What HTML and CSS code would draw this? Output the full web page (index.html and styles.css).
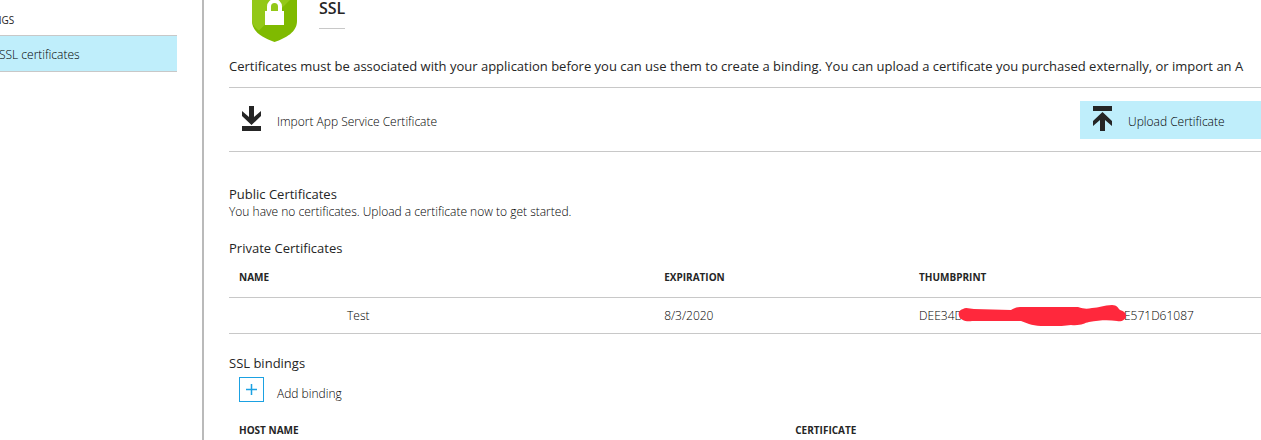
FILE: index.html
```
<!DOCTYPE html>
<html lang="en">
<head>
    <meta charset="UTF-8">
    <meta name="viewport" content="width=device-width, initial-scale=1.0">
    <title>SSL certificates</title>
    <link rel="stylesheet" href="styles.css">
</head>
<body>
    <nav class="sidebar">
        <h2 class="menu-title">NGS</h2>
        <a class="menu-item" href="#">SSL certificates</a>
    </nav>

    <main class="content">
        <header class="page-header">
            <svg class="shield" viewBox="0 0 46 42" aria-hidden="true">
                <path fill="#7fba00" d="M0 0h45v21c0 11-11 17-22.500 21C11 38 0 32 0 21z"/>
                <path fill="#93c818" d="M0 0h38L7 30.500C3 28 0 24 0 20z"/>
                <path fill="none" stroke="#fff" stroke-width="4" d="M17 12V6.500a5.500 5.500 0 0 1 11 0V12"/>
                <rect fill="#fff" x="13" y="11" width="19" height="14"/>
            </svg>
            <h1>SSL</h1>
        </header>

        <p class="intro">Certificates must be associated with your application before you can use them to create a binding. You can upload a certificate you purchased externally, or import an A</p>

        <div class="toolbar">
            <button class="tool" type="button">
                <svg class="tool-icon" viewBox="0 0 19 25" aria-hidden="true">
                    <path d="M7 0h5v11l7-6v5L9.500 19 0 10V5l7 6zM0 20h19v5H0z"/>
                </svg>
                Import App Service Certificate
            </button>
            <button class="tool upload" type="button">
                <svg class="tool-icon" viewBox="0 0 19 25" aria-hidden="true">
                    <path d="M0 0h19v5H0zM9.500 6L19 15v5l-7-6v11H7V14l-7 6v-5z"/>
                </svg>
                Upload Certificate
            </button>
        </div>

        <section class="public">
            <h2>Public Certificates</h2>
            <p>You have no certificates. Upload a certificate now to get started.</p>
        </section>

        <section class="private">
            <h2>Private Certificates</h2>
            <table class="certs">
                <thead>
                    <tr>
                        <th class="col-name">NAME</th>
                        <th class="col-date">EXPIRATION</th>
                        <th>THUMBPRINT</th>
                    </tr>
                </thead>
                <tbody>
                    <tr>
                        <td class="cert-name">Test</td>
                        <td>8/3/2020</td>
                        <td>
                            <div class="thumbprint">
                                <span>DEE34D</span>
                                <svg class="redacted" viewBox="0 0 168 21" aria-hidden="true">
                                    <path fill="#ff283c" d="M5 4c3-2 7 0 11 0l37 1c3-2 6-3 9-3h58c6 2 9 2 14 1 7 0 12-3 20-3 5 0 6 3 8 5 4 1 6 3 6 6 0 4-5 6-9 5-8-1-17-1-28 1-5 1-8 4-18 3-14 2-32 2-42-1l-8-3H14c-6 1-12-1-13-5C0 8 1 5 5 4z"/>
                                </svg>
                                <span>E571D61087</span>
                            </div>
                        </td>
                    </tr>
                </tbody>
            </table>
        </section>

        <section class="bindings">
            <h2>SSL bindings</h2>
            <button class="add" type="button">
                <svg class="add-icon" viewBox="0 0 25 25" aria-hidden="true">
                    <rect x=".5" y=".5" width="24" height="24"/>
                    <path stroke-width="1.500" d="M12.500 7v11M7 12.500h11"/>
                </svg>
                <span>Add binding</span>
            </button>
            <table class="certs">
                <thead>
                    <tr>
                        <th class="col-host">HOST NAME</th>
                        <th>CERTIFICATE</th>
                    </tr>
                </thead>
            </table>
        </section>
    </main>
</body>
</html>
```
FILE: styles.css
```
* {
    box-sizing: border-box;
}
body {
    margin: 0;
    display: flex;
    min-height: 100vh;
    overflow: hidden;
    background-color: #fff;
    color: #000;
    font-family: "Open Sans", "Noto Sans", sans-serif;
    font-size: 12px;
    font-weight: 300;
    line-height: 16px;
}
h1, h2, p {
    margin: 0;
}
h1, h2, th, .intro {
    color: #252525;
}
button {
    border: none;
    padding: 0;
    background: none;
    color: inherit;
    font: inherit;
    text-align: left;
    cursor: pointer;
}
.sidebar {
    flex: 0 0 202px;
    padding: 12px 25px 0 0;
    overflow: hidden;
}
.menu-title {
    margin: 0 0 7px -6px;
    font-size: 10px;
    font-weight: 400;
}
.menu-item {
    display: block;
    padding: 11px 0 8px;
    border-top: 1px solid #c8c8c8;
    border-bottom: 1px solid #c8c8c8;
    background-color: #bfeefb;
    color: inherit;
    text-decoration: none;
    text-indent: -1px;
}
.content {
    flex: 1;
    min-width: 0;
    padding-left: 25px;
    border-left: 2px solid #bababa;
}
.page-header {
    display: flex;
    align-items: flex-start;
    gap: 21px;
    padding-left: 23px;
}
.shield {
    width: 46px;
    height: 42px;
}
h1 {
    padding-bottom: 8px;
    border-bottom: 1px solid #c8c8c8;
    font-size: 16px;
    font-weight: 600;
    line-height: 20px;
    margin-top: -2px;
    padding-bottom: 10px;
}
.intro {
    padding: 14px 0 11px;
    overflow: hidden;
    font-size: 13px;
    font-weight: 400;
    line-height: 20px;
    white-space: nowrap;
}
.toolbar {
    display: flex;
    justify-content: space-between;
    padding: 13px 0 12px;
    border-top: 1px solid #c8c8c8;
    border-bottom: 1px solid #c8c8c8;
}
.tool {
    display: flex;
    align-items: flex-end;
    gap: 16px;
    height: 38px;
    padding: 0 13px 9px;
}
.upload {
    width: 181px;
    background-color: #bfeefb;
}
.tool-icon {
    align-self: center;
    width: 19px;
    height: 25px;
    margin-bottom: -5px;
    fill: #252525;
}
section h2 {
    font-size: 13px;
    font-weight: 400;
    line-height: 18px;
}
.public {
    padding-top: 33px;
}
.public p {
    padding-top: 1px;
}
.private {
    padding-top: 19px;
}
.bindings {
    padding-top: 20px;
}
.certs {
    width: 100%;
    table-layout: fixed;
    border-collapse: collapse;
}
.certs th {
    padding: 12px 10px;
    font-size: 10px;
    font-weight: 700;
    text-align: left;
}
.certs td {
    height: 36px;
    padding: 0 10px;
    border-top: 1px solid #c8c8c8;
    border-bottom: 1px solid #c8c8c8;
}
.certs .cert-name {
    padding-left: 118px;
}
.col-name {
    width: 41.2%;
}
.col-date {
    width: 24.7%;
}
.col-host {
    width: 53.9%;
}
.thumbprint {
    display: flex;
    align-items: center;
}
/* marker stroke runs slightly over the digits on both sides */
.redacted {
    position: relative;
    width: 168px;
    height: 21px;
    margin: 0 -2px 0 -5px;
}
.add {
    display: flex;
    align-items: flex-end;
    gap: 13px;
    margin: 5px 0 8px 10px;
}
.add-icon {
    width: 25px;
    height: 25px;
    fill: none;
    stroke: #1ba1e2;
}
```
